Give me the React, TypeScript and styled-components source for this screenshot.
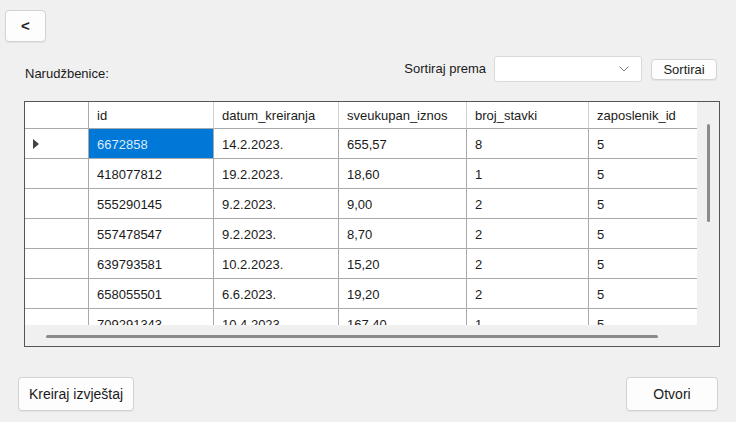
import React from "react";
import styled, { createGlobalStyle } from "styled-components";

const Global = createGlobalStyle`
  html, body { margin: 0; padding: 0; background: #f0f0f0; }
  body { font-family: "Liberation Sans", Arial, sans-serif; color: #1a1a1a; }
  * { box-sizing: border-box; }
`;

const Page = styled.div`
  width: 736px;
  height: 422px;
  display: flex;
  flex-direction: column;
  background: #f0f0f0;
  overflow: hidden;
`;

const TopBar = styled.div`
  display: flex;
  padding: 10px 0 0 5px;
`;

const Button = styled.button<{ $w: number; $h: number; $fs?: number }>`
  width: ${(p) => p.$w}px;
  height: ${(p) => p.$h}px;
  background: #fdfdfd;
  border: 1px solid #d3d3d3;
  border-radius: 4px;
  box-shadow: 0 1px 1px rgba(0, 0, 0, 0.06);
  font-family: "Liberation Sans", Arial, sans-serif;
  font-size: ${(p) => p.$fs ?? 13}px;
  color: #1a1a1a;
  padding: 0;
  display: flex;
  align-items: center;
  justify-content: center;
`;

const BackGlyph = styled.span`
  font-size: 15px;
  font-weight: bold;
  color: #222;
  line-height: 1;
  margin-top: -1px;
`;

const Toolbar = styled.div`
  display: flex;
  justify-content: space-between;
  height: 26px;
  margin-top: 14px;
  padding: 0 19px 0 25px;
`;

const Title = styled.span`
  align-self: flex-end;
  font-size: 13px;
  line-height: 15px;
  margin-bottom: 1px;
`;

const SortGroup = styled.div`
  display: flex;
  align-items: center;
  gap: 8px;
`;

const SortLabel = styled.span`
  font-size: 13px;
  line-height: 15px;
  margin-top: -1px;
`;

const Combo = styled.div`
  width: 148px;
  height: 26px;
  background: #ffffff;
  border: 1px solid #dadada;
  border-radius: 3px;
  display: flex;
  align-items: center;
  justify-content: flex-end;
  padding-right: 12px;
`;

const SortButton = styled(Button)`
  margin-left: 1px;
`;

const GridBox = styled.div`
  margin: 19px 0 0 24px;
  width: 696px;
  height: 246px;
  border: 1px solid #555555;
  display: grid;
  grid-template-columns: 672px 22px;
  grid-template-rows: 223px 21px;
  background: #f0f0f0;
`;

const Viewport = styled.div`
  overflow: hidden;
  background: #ffffff;
`;

const Table = styled.div`
  display: grid;
  grid-template-columns: 64px 125px 125px 128px 122px 125px;
  grid-auto-rows: 30px;
  grid-template-rows: 27px;
  width: max-content;
`;

const Cell = styled.div<{ $selected?: boolean; $head?: boolean }>`
  border-right: 1px solid ${(p) => (p.$head ? "#d0d0d0" : "#a9a9a9")};
  border-bottom: 1px solid #a9a9a9;
  padding-left: 8px;
  padding-top: ${(p) => (p.$head ? 0 : 1)}px;
  display: flex;
  align-items: center;
  font-size: 13px;
  white-space: nowrap;
  overflow: hidden;
  background: ${(p) => (p.$selected ? "#0078d7" : "#ffffff")};
  color: ${(p) => (p.$selected ? "#dcebf8" : "#1a1a1a")};
`;

const RowHead = styled.div`
  border-right: 1px solid #a9a9a9;
  border-bottom: 1px solid #a9a9a9;
  background: #ffffff;
  display: flex;
  align-items: center;
  padding-left: 8px;
`;

const Arrow = styled.svg`
  width: 6px;
  height: 10px;
  margin-top: 1px;
`;

const VScroll = styled.div`
  padding: 22px 0 0 10px;
`;

const VThumb = styled.div`
  width: 3px;
  height: 98px;
  border-radius: 2px;
  background: #8b8b8b;
`;

const HScroll = styled.div`
  padding: 10px 0 0 21px;
`;

const HThumb = styled.div`
  width: 612px;
  height: 3px;
  border-radius: 2px;
  background: #8b8b8b;
`;

const Corner = styled.div``;

const Footer = styled.div`
  display: flex;
  justify-content: space-between;
  margin-top: 30px;
  padding: 0 18px;
`;

const columns = ["id", "datum_kreiranja", "sveukupan_iznos", "broj_stavki", "zaposlenik_id"];

const rows = [
  ["6672858", "14.2.2023.", "655,57", "8", "5"],
  ["418077812", "19.2.2023.", "18,60", "1", "5"],
  ["555290145", "9.2.2023.", "9,00", "2", "5"],
  ["557478547", "9.2.2023.", "8,70", "2", "5"],
  ["639793581", "10.2.2023.", "15,20", "2", "5"],
  ["658055501", "6.6.2023.", "19,20", "2", "5"],
  ["709291343", "10.4.2023.", "167,40", "1", "5"],
];

export default function App() {
  return (
    <Page>
      <Global />
      <TopBar>
        <Button $w={41} $h={32}>
          <BackGlyph>&lt;</BackGlyph>
        </Button>
      </TopBar>
      <Toolbar>
        <Title>Narudžbenice:</Title>
        <SortGroup>
          <SortLabel>Sortiraj prema</SortLabel>
          <Combo>
            <svg width="10" height="6" viewBox="0 0 10 6">
              <polyline points="0.5,0.5 5,5 9.5,0.5" fill="none" stroke="#7a7a7a" strokeWidth="1" />
            </svg>
          </Combo>
          <SortButton $w={66} $h={21}>Sortirai</SortButton>
        </SortGroup>
      </Toolbar>
      <GridBox>
        <Viewport>
          <Table>
            <RowHead />
            {columns.map((c) => (
              <Cell key={c} $head>
                {c}
              </Cell>
            ))}
            {rows.map((r, i) => (
              <React.Fragment key={r[0]}>
                <RowHead>
                  {i === 0 && (
                    <Arrow viewBox="0 0 6 10">
                      <polygon points="0,0 6,5 0,10" fill="#444" />
                    </Arrow>
                  )}
                </RowHead>
                {r.map((v, j) => (
                  <Cell key={j} $selected={i === 0 && j === 0}>
                    {v}
                  </Cell>
                ))}
              </React.Fragment>
            ))}
          </Table>
        </Viewport>
        <VScroll>
          <VThumb />
        </VScroll>
        <HScroll>
          <HThumb />
        </HScroll>
        <Corner />
      </GridBox>
      <Footer>
        <Button $w={116} $h={34} $fs={14}>Kreiraj izvještaj</Button>
        <Button $w={92} $h={34} $fs={14}>Otvori</Button>
      </Footer>
    </Page>
  );
}
